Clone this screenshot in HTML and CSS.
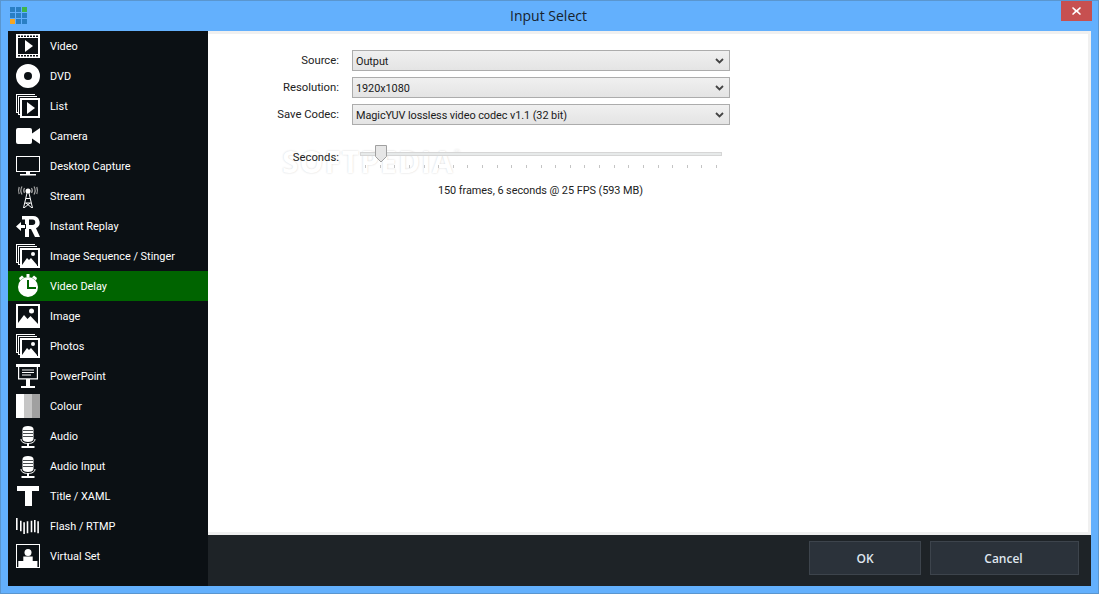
FILE: index.html
```html
<!DOCTYPE html>
<html lang="en">
<head>
<meta charset="utf-8">
<title>Input Select</title>
<link rel="stylesheet" href="styles.css">
</head>
<body>
<svg class="defs" width="0" height="0" aria-hidden="true">
  <symbol id="i-video" viewBox="0 0 24 24"><path fill-rule="evenodd" d="M0 0h24v24H0zM2 4v16h20V4zM2 1.500v1.500h2V1.500zM5 1.500v1.500h2V1.500zM8 1.500v1.500h2V1.500zM11 1.500v1.500h2V1.500zM14 1.500v1.500h2V1.500zM17 1.500v1.500h2V1.500zM20 1.500v1.500h2V1.500zM2 21v1.500h2V21zM5 21v1.500h2V21zM8 21v1.500h2V21zM11 21v1.500h2V21zM14 21v1.500h2V21zM17 21v1.500h2V21zM20 21v1.500h2V21z"/><path d="M9 6l8 6-8 6z"/></symbol>
  <symbol id="i-dvd" viewBox="0 0 24 24"><path fill-rule="evenodd" d="M12 0a12 12 0 1 0 0 24a12 12 0 1 0 0-24zM12 8a4 4 0 1 1 0 8a4 4 0 1 1 0-8z"/></symbol>
  <symbol id="i-list" viewBox="0 0 24 24"><path fill-rule="evenodd" d="M0 0h19v1H1v17h1V2h19v1H3v17h1V4h20v20H4v-3H2v-2H0zM6 6v16h16V6z"/><path d="M11 8l8 6-8 6z"/></symbol>
  <symbol id="i-camera" viewBox="0 0 24 24"><path d="M2 4h12a2 2 0 0 1 2 2v3.500L24 4v16l-8-5.500V18a2 2 0 0 1-2 2H2a2 2 0 0 1-2-2V6a2 2 0 0 1 2-2z"/></symbol>
  <symbol id="i-desktop" viewBox="0 0 24 24"><path fill-rule="evenodd" d="M0 2h24v16H0zM1 3v14h22V3z"/><path d="M10 18h4v2h-4zM4 20h16v1.500H4z"/></symbol>
  <symbol id="i-stream" viewBox="0 0 24 24"><g fill="none" stroke="#a8a8a8" stroke-width="1.200"><path d="M8.500 9a4.500 4.500 0 0 1 0-5M15.500 4a4.500 4.500 0 0 1 0 5M6 10.500a8 8 0 0 1 0-8M18 2.500a8 8 0 0 1 0 8M3.200 10a10 10 0 0 1 0-7M20.800 3a10 10 0 0 1 0 7"/></g><circle cx="12" cy="7" r="2.500"/><path fill="none" stroke="currentColor" d="M11 9L7.500 24M13 9l3.500 15M10 14.500h4M9 19h6M8 24l6-5M16 24l-6-5"/></symbol>
  <symbol id="i-replay" viewBox="0 0 24 24"><path fill-rule="evenodd" d="M6 2h11a6.500 6.500 0 0 1 3 12.300L24 23h-5l-4-8h-2v8H9v-8h1v-5H9V5.500H6zM13 5.500V11h3.500a2.750 2.750 0 0 0 0-5.500z"/><path d="M0 12.500L5 8v3h4v3H5v3z"/></symbol>
  <symbol id="i-seq" viewBox="0 0 24 24"><path fill-rule="evenodd" d="M0 0h19v1H1v17h1V2h19v1H3v17h1V4h20v20H4v-3H2v-2H0zM6 6v16h16V6z"/><circle cx="17" cy="10" r="2"/><path d="M6 21l5-7 2 2 2-2 6 7v1H6z"/></symbol>
  <symbol id="i-delay" viewBox="0 0 24 24"><path fill-rule="evenodd" d="M12 3a10 10 0 1 1 0 20a10 10 0 1 1 0-20zM11 6v9h9v-2h-7V6z"/><path d="M10.500 0h3v3h-3zM3 4l3-2.500 2 2-4 3zM21 4l-3-2.500-2 2 4 3z"/></symbol>
  <symbol id="i-image" viewBox="0 0 24 24"><path fill-rule="evenodd" d="M0 0h24v24H0zM2 2v20h20V2z"/><circle cx="15.500" cy="7" r="2.500"/><path d="M2 22v-3l6-8 3.500 4 3-3 7.500 8v2z"/></symbol>
  <symbol id="i-photos" viewBox="0 0 24 24"><path fill-rule="evenodd" d="M0 0h19v1H1v17h1V2h19v1H3v17h1V4h20v20H4v-3H2v-2H0zM6 6v16h16V6z"/><circle cx="17" cy="10" r="2"/><path d="M6 21l5-7 2 2 2-2 6 7v1H6z"/></symbol>
  <symbol id="i-ppt" viewBox="0 0 24 24"><path fill-rule="evenodd" d="M0 0h24v3h-2v12.500H14V22h5v2H5v-2h5v-6.500H2V3H0zM3.200 3v11.300h17.600V3z"/><path d="M6 5.500h12v1H6zM6 8h12v1H6zM6 10.500h9v1H6z"/></symbol>
  <symbol id="i-colour" viewBox="0 0 24 24"><path d="M0 0h8v24H0z"/><path fill="#c6c6c6" d="M8 0h8v24H8z"/><path fill="#a0a0a0" d="M16 0h8v24h-8z"/></symbol>
  <symbol id="i-mic" viewBox="0 0 24 24"><path fill-rule="evenodd" d="M12 2c3 0 5.500 1 5.500 3v10c0 2-2.500 3-5.500 3s-5.500-1-5.500-3V5c0-2 2.500-3 5.500-3zM7 6v.8h10V6zM7 9v.8h10V9zM7 12v.8h10V12z"/><path fill="none" stroke="currentColor" d="M5 15c0 3 3 4.500 7 4.500s7-1.500 7-4.500"/><path d="M11 19h2v3h-2zM5.500 22h13v2h-13z"/></symbol>
  <symbol id="i-title" viewBox="0 0 24 24"><path d="M1 2h22v5h-7v15H9V7H1z"/></symbol>
  <symbol id="i-flash" viewBox="0 0 24 24"><path d="M0 4h1.600v12H0zM4 6.700h1.600v10.600H4zM7.300 8.300h1.600V20H7.300zM10.700 7.300h1.600v12h-1.600zM14.700 6.700h1.600v11.600h-1.600zM18 6h1.600v12.300H18zM21.300 7.300h1.600v12h-1.600z"/></symbol>
  <symbol id="i-set" viewBox="0 0 24 24"><path fill-rule="evenodd" d="M0 0h24v24H0zM1 1v22h22V1z"/><circle cx="12" cy="8.500" r="3.500"/><path d="M2.300 23v-6h5v-4.500h9.400V17h4.700v6z"/></symbol>
</svg>

<div class="window">
  <header class="titlebar">
    <div class="logo" aria-hidden="true">
      <i></i><i></i><i class="green"></i>
      <i></i><i></i><i></i>
      <i class="orange"></i><i></i><i></i>
    </div>
    <h1 class="title">Input Select</h1>
    <button class="close" type="button" aria-label="Close">
      <svg width="9" height="8" viewBox="0 0 9 8"><path d="M1 0l3.500 3L8 0l1 1-3 3 3 3-1 1-3.500-3L1 8 0 7l3-3-3-3z" fill="#fff"/></svg>
    </button>
  </header>
  <div class="content">
    <nav class="sidebar">
      <a class="item"><svg class="icon"><use href="#i-video"/></svg><span>Video</span></a>
      <a class="item"><svg class="icon"><use href="#i-dvd"/></svg><span>DVD</span></a>
      <a class="item"><svg class="icon"><use href="#i-list"/></svg><span>List</span></a>
      <a class="item"><svg class="icon"><use href="#i-camera"/></svg><span>Camera</span></a>
      <a class="item"><svg class="icon"><use href="#i-desktop"/></svg><span>Desktop Capture</span></a>
      <a class="item"><svg class="icon"><use href="#i-stream"/></svg><span>Stream</span></a>
      <a class="item"><svg class="icon"><use href="#i-replay"/></svg><span>Instant Replay</span></a>
      <a class="item"><svg class="icon"><use href="#i-seq"/></svg><span>Image Sequence / Stinger</span></a>
      <a class="item active"><svg class="icon"><use href="#i-delay"/></svg><span>Video Delay</span></a>
      <a class="item"><svg class="icon"><use href="#i-image"/></svg><span>Image</span></a>
      <a class="item"><svg class="icon"><use href="#i-photos"/></svg><span>Photos</span></a>
      <a class="item"><svg class="icon"><use href="#i-ppt"/></svg><span>PowerPoint</span></a>
      <a class="item"><svg class="icon"><use href="#i-colour"/></svg><span>Colour</span></a>
      <a class="item"><svg class="icon"><use href="#i-mic"/></svg><span>Audio</span></a>
      <a class="item"><svg class="icon"><use href="#i-mic"/></svg><span>Audio Input</span></a>
      <a class="item"><svg class="icon"><use href="#i-title"/></svg><span>Title / XAML</span></a>
      <a class="item"><svg class="icon"><use href="#i-flash"/></svg><span>Flash / RTMP</span></a>
      <a class="item"><svg class="icon"><use href="#i-set"/></svg><span>Virtual Set</span></a>
    </nav>
    <div class="main">
      <section class="panel">
        <div class="form">
          <label class="label">Source:</label>
          <div class="select"><span>Output</span><svg class="chev" viewBox="0 0 9 6"><path d="M1 1l3.500 3.500L8 1" fill="none" stroke="#444" stroke-width="1.800"/></svg></div>
          <label class="label">Resolution:</label>
          <div class="select"><span>1920x1080</span><svg class="chev" viewBox="0 0 9 6"><path d="M1 1l3.500 3.500L8 1" fill="none" stroke="#444" stroke-width="1.800"/></svg></div>
          <label class="label">Save Codec:</label>
          <div class="select"><span>MagicYUV lossless video codec v1.1 (32 bit)</span><svg class="chev" viewBox="0 0 9 6"><path d="M1 1l3.500 3.500L8 1" fill="none" stroke="#444" stroke-width="1.800"/></svg></div>
        </div>
        <div class="seconds">
          <div class="watermark" aria-hidden="true">SOFTPEDIA<sup class="reg">®</sup></div>
          <label class="label">Seconds:</label>
          <div class="slider">
            <div class="track"></div>
            <svg class="thumb" width="12" height="18" viewBox="0 0 12 18"><path d="M.5.500h11v11L6 17 .5 11.500z" fill="#e6e6e6" stroke="#a0a0a0"/></svg>
            <div class="ticks"><i></i><i></i><i></i><i></i><i></i><i></i><i></i><i></i><i></i><i></i><i></i><i></i><i></i><i></i><i></i><i></i><i></i><i></i><i></i><i></i><i></i><i></i><i></i><i></i><i></i></div>
          </div>
        </div>
        <p class="info">150 frames, 6 seconds @ 25 FPS (593 MB)</p>
      </section>
      <footer class="actions">
        <button class="btn ok" type="button">OK</button>
        <button class="btn cancel" type="button">Cancel</button>
      </footer>
    </div>
  </div>
</div>
</body>
</html>
```

FILE: styles.css
```css
* { box-sizing: border-box; }
html, body { margin: 0; height: 100%; overflow: hidden; }
body { font-family: Roboto, "Liberation Sans", sans-serif; font-size: 10.900px; }
.defs { position: absolute; }

.window {
  width: 1099px; height: 594px;
  display: flex; flex-direction: column;
  background: #63b0fd;
  border: 1px solid #5a96cf;
  padding: 0 7px 7px;
}
.titlebar {
  height: 30px; flex: none;
  display: flex; align-items: flex-start;
  position: relative;
  margin: 0 -7px;
}
.logo {
  position: absolute; left: 9px; top: 6px;
  display: grid; grid-template-columns: repeat(3, 5px); grid-auto-rows: 5px; gap: 1px;
}
.logo i { background: #2a7fc4; }
.logo .green { background: #3fb54a; }
.logo .orange { background: #f5a623; }
.title {
  flex: 1; margin: 0; text-align: center; padding-right: 2px;
  font: 400 14px/30px "Open Sans", sans-serif; color: #17232e;
}
.close {
  position: absolute; right: 6px; top: 0;
  width: 31px; height: 20px; padding: 0; border: 0;
  background: #c75050;
  display: flex; align-items: center; justify-content: center;
}

.content { flex: 1; display: flex; min-height: 0; }

.sidebar { width: 200px; flex: none; background: #0b1014; display: flex; flex-direction: column; }
.item { height: 30px; flex: none; display: flex; align-items: center; gap: 10px; padding-left: 8px; color: #fff; }
.item.active { background: #006400; }
.icon { width: 24px; height: 24px; flex: none; fill: #fff; color: #fff; }

.main { flex: 1; display: flex; flex-direction: column; min-width: 0; }
.panel {
  flex: 1; background: #fff; color: #1a1a1a;
  border: solid #f0f0f0; border-width: 3px 3px 3px 0;
  padding: 16px 0 0 0;
}
.form {
  display: grid; grid-template-columns: 131px 378px; column-gap: 13px; row-gap: 6px;
  align-items: center;
}
.label { text-align: right; color: #222; position: relative; font-size: 11.300px; }
.select {
  height: 21px;
  display: flex; align-items: center; justify-content: space-between;
  padding: 1px 3px 0 3px;
  letter-spacing: -.07px;
  background: linear-gradient(#f0f0f0, #e4e4e4);
  border: 1px solid #acacac;
}
.chev { width: 9px; height: 6px; margin-right: 2px; margin-top: -1px; }

.seconds {
  position: relative;
  display: grid; grid-template-columns: 131px 362px; column-gap: 21px;
  margin-top: 21px; height: 28px;
}
.seconds .label { line-height: 24px; }
.slider { position: relative; }
.track { position: absolute; left: 0; right: 0; top: 6px; height: 4px; background: #e7eaea; border: 1px solid #d6d6d6; }
.thumb { position: absolute; left: 15px; top: -1px; }
.ticks { position: absolute; left: 5px; right: 5px; top: 19px; display: flex; justify-content: space-between; }
.ticks i { width: 1px; height: 3px; background: #c4c4c4; }
.watermark {
  position: absolute; left: 74px; top: 1px;
  font: 700 30px/30px "Open Sans", sans-serif; letter-spacing: 1px;
  color: #fff; text-shadow: 0 0 2px rgba(0,0,0,.18);
  pointer-events: none; white-space: nowrap;
}
.reg { font-size: 8px; font-weight: 400; line-height: 0; vertical-align: 18px; }
.info { margin: 9px 0 0; width: 665px; text-align: right; padding-right: 230px; color: #222; line-height: 16px; letter-spacing: -.05px; }

.actions {
  height: 51px; flex: none; background: #1e2327;
  display: flex; justify-content: flex-end; gap: 9px;
  padding: 6px 12px 0 0;
}
.btn {
  height: 34px; padding: 0;
  background: #2b323a; border: 1px solid #3d444c;
  color: #dfe6ee; font: 600 12px "Open Sans", "Liberation Sans", sans-serif;
}
.ok { width: 112px; }
.cancel { width: 149px; padding-right: 2px; }
```
